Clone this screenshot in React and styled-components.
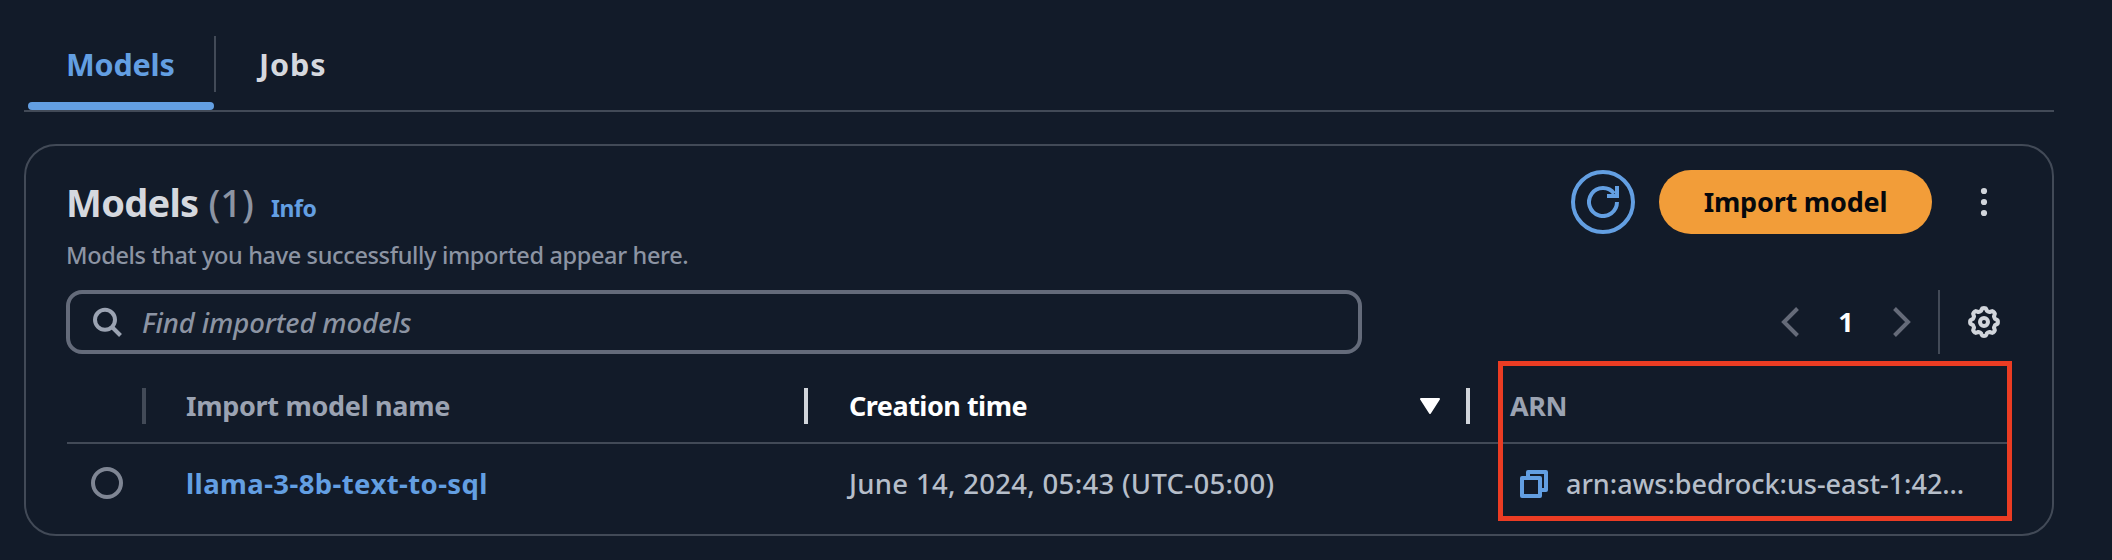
import React from "react";
import styled, { createGlobalStyle } from "styled-components";

const Global = createGlobalStyle`
  * { box-sizing: border-box; }
  body { margin: 0; background: #121b29; }
`;

const Page = styled.main`
  width: 2112px;
  height: 560px;
  padding: 36px 58px 0 24px;
  background: #121b29;
  color: #b6bec9;
  font-family: "Noto Sans", "Open Sans", sans-serif;
`;

const Label = styled.span`
  display: inline-block;
  white-space: nowrap;
  color: ${(p) => p.$color || "inherit"};
  font-size: ${(p) => p.$size || 27}px;
  font-weight: ${(p) => p.$weight || 500};
  font-style: ${(p) => (p.$italic ? "italic" : "normal")};
  letter-spacing: ${(p) => p.$track || 0}px;
  line-height: 36px;
`;

const TabBar = styled.nav`
  display: flex;
  height: 76px;
  padding-left: 4px;
  border-bottom: 2px solid #424a57;
`;

const Tab = styled.button`
  display: flex;
  flex-direction: column;
  justify-content: space-between;
  height: 74px;
  width: ${(p) => p.$width}px;
  padding: 0;
  border: 0;
  background: none;
  font-family: inherit;
  text-align: left;
`;

const TabBody = styled.span`
  display: flex;
  height: 56px;
  padding: 10px 0 0 ${(p) => p.$inset}px;
  border-right: ${(p) => (p.$divided ? "2px solid #424a57" : "0")};
`;

const TabMarker = styled.span`
  width: 186px;
  height: 8px;
  border-radius: 4px;
  background: #639fe2;
`;

const Card = styled.section`
  height: 392px;
  margin-top: 32px;
  padding: 24px 40px 0 41px;
  border: 2px solid #424a57;
  border-radius: 32px;
`;

const CardHeader = styled.header`
  display: flex;
  justify-content: space-between;
  height: 120px;
`;

const TitleRow = styled.div`
  display: flex;
  align-items: baseline;
  height: 67px;
  padding-top: 14px;
  margin-left: -1px;
`;

const Heading = styled.h2`
  margin: 0 17px 0 0;
  display: flex;
  gap: 10px;
  font: inherit;
`;

const Description = styled.p`
  margin: 0 0 0 -1px;
`;

const Actions = styled.div`
  display: flex;
  align-items: center;
  height: 64px;
  padding-right: 24px;
`;

const RefreshButton = styled.button`
  display: grid;
  place-items: center;
  width: 64px;
  height: 64px;
  padding: 0;
  border: 4px solid #639fe2;
  border-radius: 50%;
  background: none;
`;

const PrimaryButton = styled.button`
  width: 273px;
  height: 64px;
  margin: 0 48px 0 24px;
  padding: 0;
  border: 0;
  border-radius: 32px;
  background: #f29d39;
  font-family: inherit;
`;

const Icon = styled.svg`
  display: block;
  flex: none;
`;

const Tools = styled.div`
  display: flex;
  justify-content: space-between;
  height: 64px;
`;

const SearchBox = styled.div`
  display: flex;
  align-items: center;
  gap: 19px;
  width: 1296px;
  height: 64px;
  margin-left: -1px;
  padding-left: 21px;
  border: 4px solid #646b7a;
  border-radius: 16px;

  ${Label} {
    padding-top: 2px;
  }
`;

const Pager = styled.div`
  display: flex;
  align-items: center;
  padding-right: 12px;
`;

const PageNumber = styled.span`
  width: 92px;
  text-align: center;
`;

const PagerDivider = styled.span`
  width: 2px;
  height: 64px;
  margin: 0 28px 0 26px;
  background: #424a57;
`;

const Row = styled.div`
  display: grid;
  grid-template-columns: 79px 662px 662px 542px;
  align-items: center;
  height: ${(p) => p.$height}px;
  padding-top: ${(p) => p.$top || 0}px;
  margin-right: 1px;
  border-bottom: ${(p) => (p.$line ? "2px solid #424a57" : "0")};
`;

const Cell = styled.div`
  display: flex;
  align-items: center;
  justify-content: ${(p) => (p.$spread ? "space-between" : "flex-start")};
  height: 36px;
  padding: 0 ${(p) => p.$right || 0}px 0 ${(p) => p.$left || 0}px;
  border-right: ${(p) => (p.$edge ? `4px solid ${p.$edge}` : "0")};
`;

const DataCell = styled(Cell)`
  ${Label} {
    padding-top: 1px;
  }
`;

const ArnCell = styled(DataCell)`
  gap: 18px;

  svg {
    margin-top: 2px;
  }
`;

const Radio = styled.span`
  width: 32px;
  height: 32px;
  border: 4px solid #7f8694;
  border-radius: 50%;
`;

const Callout = styled.div`
  position: absolute;
  left: 1498px;
  top: 361px;
  width: 514px;
  height: 160px;
  border: 5px solid #eb3c23;
`;

const RefreshIcon = () => (
  <Icon width="32" height="32" viewBox="0 0 32 32" fill="none" stroke="#639fe2" strokeWidth="4">
    <path d="M30 16a14 14 0 1 1-2.8-8.400" />
    <path d="M30 0v10H20" />
  </Icon>
);

const MoreIcon = () => (
  <Icon width="8" height="32" viewBox="0 0 8 32" fill="#d1d5db">
    <circle cx="4" cy="5" r="3.1" />
    <circle cx="4" cy="16" r="3.1" />
    <circle cx="4" cy="27" r="3.1" />
  </Icon>
);

const SearchIcon = () => (
  <Icon width="32" height="32" viewBox="0 0 32 32" fill="none" stroke="#9ba3b2" strokeWidth="4">
    <circle cx="14" cy="13.800" r="10" />
    <path d="M21 21l8.500 8.500" />
  </Icon>
);

const ChevronIcon = ({ right }) => (
  <Icon width="20" height="32" viewBox="0 0 20 32" fill="none" stroke="#656b79" strokeWidth="4">
    <path d={right ? "M2.500 2.500L16 16L2.500 29.500" : "M17.500 2.500L4 16l13.500 13.500"} />
  </Icon>
);

const gearPath = Array.from({ length: 97 }, (_, i) => {
  const a = (i / 96) * Math.PI * 2;
  const r = 12.600 + 1.300 * Math.tanh(2.500 * Math.cos(8 * a));
  return `${i ? "L" : "M"}${(16 + r * Math.cos(a)).toFixed(2)} ${(16 + r * Math.sin(a)).toFixed(2)}`;
}).join("");

const GearIcon = () => (
  <Icon width="32" height="32" viewBox="0 0 32 32" fill="none" stroke="#d1d5db" strokeWidth="4">
    <path d={gearPath + "Z"} strokeLinejoin="round" />
    <circle cx="16" cy="16" r="4" />
  </Icon>
);

const SortIcon = () => (
  <Icon width="20" height="16" viewBox="0 0 20 16" fill="#fff" stroke="#fff" strokeWidth="2" strokeLinejoin="round">
    <path d="M1 1h18L10 15Z" />
  </Icon>
);

const CopyIcon = () => (
  <Icon width="28" height="28" viewBox="0 0 28 28" fill="none" stroke="#639fe2" strokeWidth="4" strokeLinejoin="round">
    <path d="M8 6V2h18v18h-4" />
    <path d="M2 8h18v18H2Z" />
  </Icon>
);

export default function App() {
  return (
    <Page>
      <Global />
      <TabBar>
        <Tab $width={188}>
          <TabBody $inset={38} $divided>
            <Label $size={30.5} $weight={700} $track={-0.2} $color="#639fe2">Models</Label>
          </TabBody>
          <TabMarker />
        </Tab>
        <Tab $width={160}>
          <TabBody $inset={43}>
            <Label $size={30.5} $weight={700} $track={0.9} $color="#d5d8de">Jobs</Label>
          </TabBody>
        </Tab>
      </TabBar>
      <Card>
        <CardHeader>
          <div>
            <TitleRow>
              <Heading>
                <Label $size={38} $weight={700} $track={-0.7} $color="#d5d8de">Models</Label>
                <Label $size={38} $color="#8c94a3">(1)</Label>
              </Heading>
              <Label $size={23} $weight={700} $track={-0.4} $color="#639fe2">Info</Label>
            </TitleRow>
            <Description>
              <Label $size={23.5} $track={-0.35} $color="#8c94a3">
                Models that you have successfully imported appear here.
              </Label>
            </Description>
          </div>
          <Actions>
            <RefreshButton aria-label="Refresh"><RefreshIcon /></RefreshButton>
            <PrimaryButton>
              <Label $weight={700} $track={-0.2} $color="#06080d">Import model</Label>
            </PrimaryButton>
            <MoreIcon />
          </Actions>
        </CardHeader>
        <Tools>
          <SearchBox>
            <SearchIcon />
            <Label $italic $size={27.5} $track={-0.12} $color="#8c94a3">Find imported models</Label>
          </SearchBox>
          <Pager>
            <ChevronIcon />
            <PageNumber><Label $weight={700} $color="#fff">1</Label></PageNumber>
            <ChevronIcon right />
            <PagerDivider />
            <GearIcon />
          </Pager>
        </Tools>
        <Row $height={90} $top={16} $line>
          <Cell $edge="#424a57" />
          <Cell $left={40} $edge="#d1d5db">
            <Label $weight={700} $track={-0.3} $color="#9ba3b2">Import model name</Label>
          </Cell>
          <Cell $left={41} $right={26} $edge="#d1d5db" $spread>
            <Label $weight={700} $track={-0.5} $color="#fff">Creation time</Label>
            <SortIcon />
          </Cell>
          <Cell $left={40}>
            <Label $weight={700} $track={-0.4} $color="#9ba3b2">ARN</Label>
          </Cell>
        </Row>
        <Row $height={78}>
          <DataCell $left={24}><Radio /></DataCell>
          <DataCell $left={40}>
            <Label $size={27.5} $weight={700} $track={0.4} $color="#639fe2">llama-3-8b-text-to-sql</Label>
          </DataCell>
          <DataCell $left={41}><Label $size={27.5} $track={0.3}>June 14, 2024, 05:43 (UTC-05:00)</Label></DataCell>
          <ArnCell $left={50}>
            <CopyIcon />
            <Label>arn:aws:bedrock:us-east-1:42…</Label>
          </ArnCell>
        </Row>
      </Card>
      <Callout />
    </Page>
  );
}
